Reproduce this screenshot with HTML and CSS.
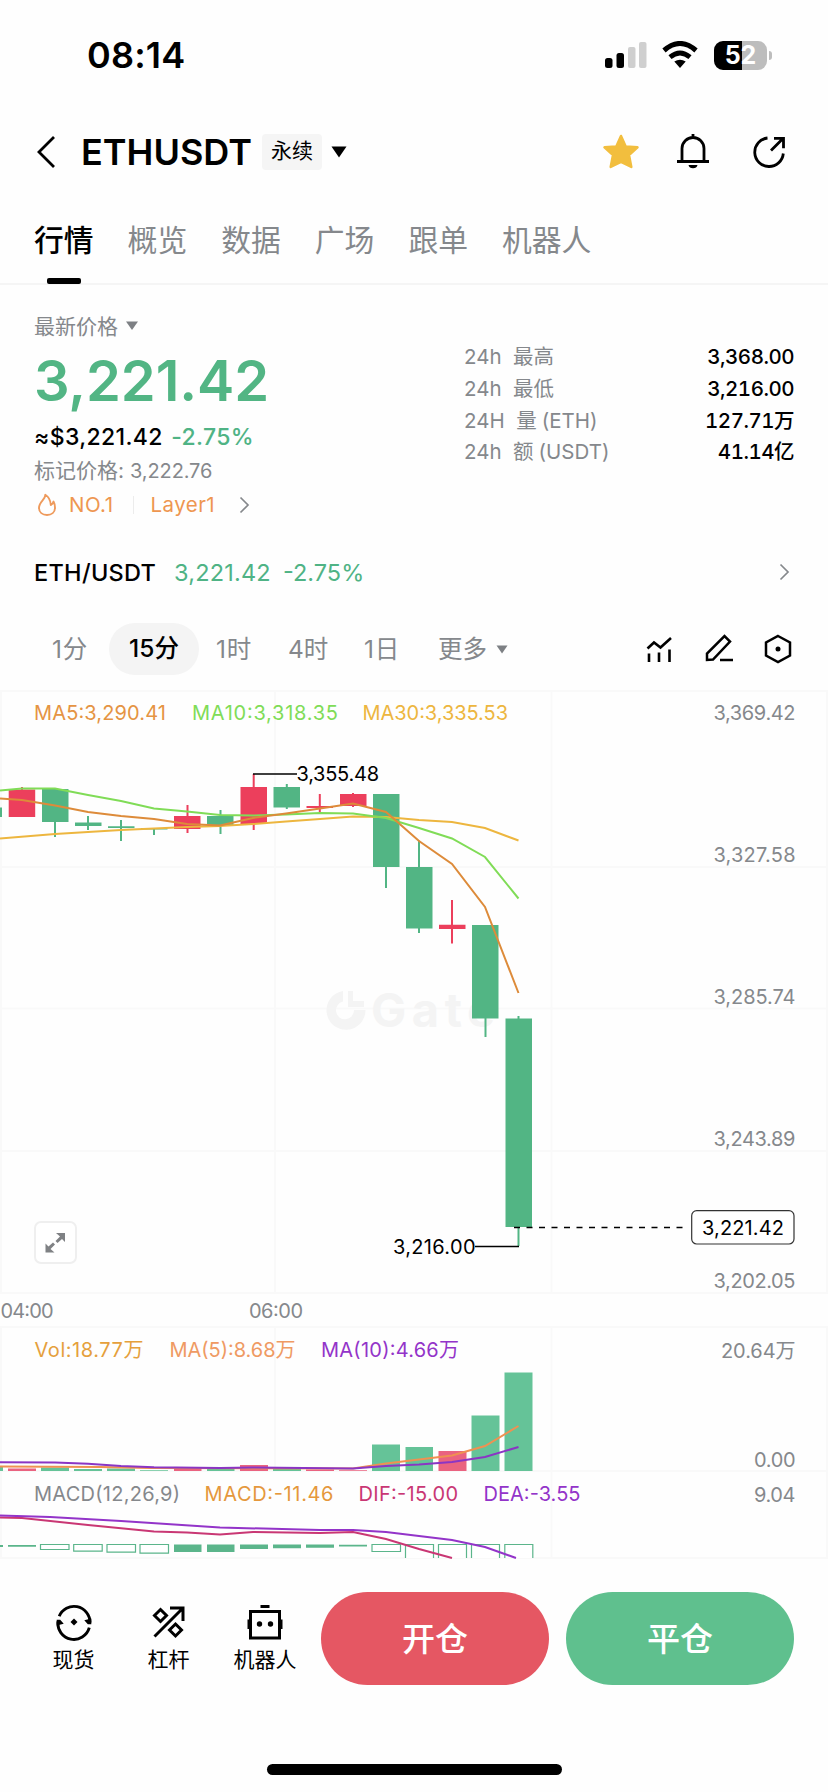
FILE: index.html
```html
<!DOCTYPE html>
<html lang="zh-CN">
<head>
<meta charset="utf-8">
<meta name="viewport" content="width=828">
<title>ETHUSDT 永续</title>
<link rel="stylesheet" href="styles.css">
</head>
<body>
<div class="screen">
  <div class="status">
    <span class="clock">08:14</span>
    <div class="status-icons">
      <svg class="signal" width="42" height="28" viewBox="0 0 42 28"><rect x="0" y="17" width="7.500" height="10" rx="2.5"/><rect x="11.5" y="12" width="7.500" height="15" rx="2.5"/><rect x="23" y="6" width="7.5" height="21" rx="2" fill="#cfcfcf"/><rect x="34" y="1" width="7.5" height="26" rx="2" fill="#cfcfcf"/></svg>
      <svg class="wifi" width="36" height="28" viewBox="0 0 36 28"><path d="M2 9.5Q18-4.500 34 9.500" fill="none" stroke="#000" stroke-width="5"/><path d="M8 16.200Q18 7.800 28 16.200" fill="none" stroke="#000" stroke-width="4.800"/><path d="M12.300 20.500Q18 16.800 23.700 20.500L18 27Z"/></svg>
      <div class="battery"><span>5</span><span>2</span></div>
      <i class="cap"></i>
    </div>
  </div>

  <header class="header">
    <svg class="back" width="20" height="34" viewBox="0 0 20 34"><path d="M18 2 3 17l15 15" fill="none" stroke="#000" stroke-width="2.800"/></svg>
    <h1>ETHUSDT</h1>
    <span class="badge">永续</span>
    <svg class="tri" width="16" height="12" viewBox="0 0 16 12"><path d="M.500.500h15L8 11.500Z"/></svg>
    <div class="actions">
      <svg width="38" height="38" viewBox="0 0 38 38"><path d="M19 3 23.700 13.500 35.500 14.300 27 22 29.300 34 19 29 8.700 34 11 22 2.500 14.300 14.300 13.500Z" fill="#f2be3e" stroke="#f2be3e" stroke-width="2.500" stroke-linejoin="round"/></svg>
      <svg width="38" height="38" viewBox="0 0 38 38" fill="none" stroke="#000" stroke-width="2.800"><path d="M3 28.500h32M8 28V15.500a11 11 0 0 1 22 0V28M19 1v4"/><path d="M14.500 32h9a4.600 4 0 0 1-9 0Z" fill="#000" stroke="none"/></svg>
      <svg width="38" height="38" viewBox="0 0 38 38" fill="none" stroke="#000" stroke-width="2.800"><path d="M17.500 5A14.300 14.300 0 1 0 33.300 20.500M21 17.500 33 5.500M24 5.300h9.500v10"/></svg>
    </div>
  </header>

  <nav class="tabs"><span class="on">行情</span><span>概览</span><span>数据</span><span>广场</span><span>跟单</span><span>机器人</span></nav>

  <section class="summary">
    <div class="quote">
      <div class="latest">最新价格<svg width="12" height="9" viewBox="0 0 12 9"><path d="M0 .500h12L6 9Z" fill="#7d8084"/></svg></div>
      <div class="price">3,221.42</div>
      <div class="usd">≈$3,221.42 <span>-2.75%</span></div>
      <div class="mark">标记价格: <span>3,222.76</span></div>
      <div class="tags">
        <svg width="20" height="24" viewBox="0 0 20 24"><path d="M8.300 1.800C8.500 6.500 2 9 2 14.800c0 4.500 3.500 7.200 8 7.200s8-2.700 8-7.200c0-2.500-.500-4.600-1.500-6.300-.300 1.800-1.300 3-2.700 3.500C13.500 7.500 12 4 8.300 1.800Z" fill="none" stroke="#ee9a5c" stroke-width="1.900" stroke-linejoin="round"/></svg>
        <span class="no">NO.1</span><i></i><span class="layer">Layer1</span>
        <svg class="chev" width="11" height="18" viewBox="0 0 11 18"><path d="m1.500 1.500 7.500 7.500-7.500 7.500" fill="none" stroke="#85888c" stroke-width="1.700"/></svg>
      </div>
    </div>
    <dl class="stats">
      <dt>24h&nbsp; 最高</dt><dd>3,368.00</dd>
      <dt>24h&nbsp; 最低</dt><dd>3,216.00</dd>
      <dt>24H&nbsp; 量<span>(ETH)</span></dt><dd>127.71万</dd>
      <dt>24h&nbsp; 额<span>(USDT)</span></dt><dd>41.14亿</dd>
    </dl>
  </section>

  <div class="spot">
    <b>ETH/USDT</b><span class="p">3,221.42</span><span class="c">-2.75%</span>
    <svg width="11" height="18" viewBox="0 0 11 18"><path d="m1.500 1.500 7.500 7.500-7.500 7.500" fill="none" stroke="#85888c" stroke-width="1.700"/></svg>
  </div>

  <div class="frames">
    <span class="f1">1分</span><span class="on">15分</span><span class="f3">1时</span><span class="f4">4时</span><span class="f5">1日</span><span class="more">更多<svg width="12" height="9" viewBox="0 0 12 9"><path d="M.500.500h11L6 8.500Z" fill="#7d8084"/></svg></span>
    <div class="tools">
      <svg width="28" height="30" viewBox="0 0 28 30" fill="none" stroke="#000" stroke-width="2.600"><path d="M1.500 14.500 8 8.500l6.500 5L25 4M3 19.500v8.500M13 18.500V28M23.500 15.500V28"/></svg>
      <svg width="30" height="30" viewBox="0 0 30 30" fill="none" stroke="#000" stroke-width="2.500"><path d="M3 26v-6.500L20.500 2l5.500 5.500L9 25.500ZM16 26h13"/></svg>
      <svg width="28" height="30" viewBox="0 0 28 30"><path d="m14 2 12 6.500v13L14 28 2 21.500v-13Z" fill="none" stroke="#000" stroke-width="2.500"/><circle cx="14" cy="15" r="2.500"/></svg>
    </div>
  </div>

  <svg class="chart" width="828" height="870" viewBox="0 690 828 870">
    <g class="grid">
      <path d="M1 691V1293M275 691V1293M551.500 691V1293M827 691V1293M0 691H828M0 867H828M0 1008.500H828M0 1151H828M0 1293H828"/>
      <path d="M0 1327H828M0 1471H828M0 1558H828M1 1327V1558M275 1327V1471M551.500 1327V1558M827 1327V1558"/>
    </g>
    <g class="watermark">
      <path d="M343 991A19.500 19.500 0 1 0 365.500 1010H354A9 9 0 1 1 343 1001.500Z"/><path d="M348 991h5v10h11v6h-16Z"/>
      <text x="371" y="1027" textLength="124">Gate</text>
    </g>
    <g class="down">
      <path class="wick" d="M55 789V837M88 816V830M121 820V841M154 828V835M220.500 810V834M286.800 784V809M386 794V888M419 840.500V933M485.500 925V1037M518.500 1016V1246"/>
      <path d="M0 807.500h2v9.500h-2ZM42 789h26.500v33h-26.500ZM75 822.500h26.500v3.500h-26.500ZM108 826.300h26.500v1.800h-26.500ZM141 828h26.500v1.500h-26.500ZM207 816h26.500v9h-26.500ZM273.500 787h26.500v20.500h-26.500ZM373 794h26.500v73h-26.500ZM406 867h26.500v61.500h-26.500ZM472 925h26.500v93.500h-26.500ZM505.500 1018.500h26.500v208.500h-26.500Z"/>
    </g>
    <g class="up">
      <path class="wick" d="M22 787V816M187.500 805V833M253.700 774V830M319.800 794V812.500M353 793V807M452 900V943.500"/>
      <path d="M8.700 789.500h26.500v27.500h-26.500ZM174 816h26.500v13h-26.500ZM240.500 787h26.500v37h-26.500ZM306.500 806h26.500v2h-26.500ZM340 794h26.500v12h-26.500ZM439 924.700h26.500v4.300h-26.500Z"/>
    </g>
    <g class="line">
      <polyline stroke="#edb63f" points="0,838.500 55,834 121,830 187,827 220,826 253,824 286,821.500 320,819 353,816.500 386,817 419,820 452,822 485,828 518.500,840.500"/>
      <polyline stroke="#80dc57" points="0,790.500 22,788.500 55,788.500 88,795 121,801 154,808.500 187,811.500 220,815 253,815.500 286,814.500 320,813 353,813.500 386,818 419,828 452,838.500 485,857 518.500,898.500"/>
      <polyline stroke="#dd8b3a" points="0,798.500 22,800 55,805.500 88,812 121,816 154,819 187,824 220,825.500 253,818 286,813.500 320,808.500 353,803.500 386,812 419,841 452,864 485,907 518.500,993"/>
    </g>
    <path class="ink" d="M253 774H297M475 1246.500H519"/>
    <path class="ink dash" d="M514 1227.500H687"/>
    <rect class="tag" x="691.700" y="1210.700" width="102.300" height="33.300" rx="5"/>
    <g class="black">
      <text x="296.500" y="781" textLength="82.500">3,355.48</text>
      <text x="393" y="1254" textLength="82.500">3,216.00</text>
      <text x="702" y="1235" textLength="82">3,221.42</text>
    </g>
    <g class="axis">
      <text x="713.500" y="720" textLength="82">3,369.42</text>
      <text x="713.500" y="862" textLength="82">3,327.58</text>
      <text x="713.500" y="1004" textLength="82">3,285.74</text>
      <text x="713.500" y="1146" textLength="82">3,243.89</text>
      <text x="713.500" y="1288" textLength="82">3,202.05</text>
      <text x="0.500" y="1318" textLength="53">04:00</text>
      <text x="249" y="1318" textLength="54">06:00</text>
      <text x="721" y="1357.500" textLength="74.500">20.64万</text>
      <text x="754" y="1466.500" textLength="41.500">0.00</text>
      <text x="754" y="1501.500" textLength="41.500">9.04</text>
      <text x="34" y="1501" textLength="146">MACD(12,26,9)</text>
    </g>
    <g class="legend">
      <text x="34" y="720" textLength="132" fill="#e59443">MA5:3,290.41</text>
      <text x="192" y="720" textLength="146" fill="#80dc57">MA10:3,318.35</text>
      <text x="362.500" y="720" textLength="145.500" fill="#edb63f">MA30:3,335.53</text>
      <text x="34.500" y="1357" textLength="109" fill="#e5a03c">Vol:18.77万</text>
      <text x="169.500" y="1357" textLength="126" fill="#ef9a63">MA(5):8.68万</text>
      <text x="321" y="1357" textLength="138" fill="#9334c9">MA(10):4.66万</text>
      <text x="204.500" y="1501" textLength="129" fill="#e5983c">MACD:-11.46</text>
      <text x="358.500" y="1501" textLength="99.500" fill="#c93774">DIF:-15.00</text>
      <text x="483.500" y="1501" textLength="97" fill="#9334c9">DEA:-3.55</text>
    </g>
    <g fill="#65c398">
      <path d="M0 1466h3v5h-3ZM41 1467.500h28v3.500h-28ZM74 1469h28v2h-28ZM107 1468.500h28v2.500h-28ZM140 1470.300h28v.7h-28ZM207 1469h27.500v2h-27.500ZM273 1468.500h28v2.500h-28ZM372 1444.500h28v26.500h-28ZM405.500 1447h27.500v24h-27.500ZM471.500 1415.500h28v55.500h-28ZM504.500 1372.500h28v98.500h-28Z"/>
    </g>
    <path fill="#ea6380" d="M8 1468.500h28v2.500h-28ZM174 1468.500h27.500v2.500h-27.500ZM240 1465h28v6h-28ZM306 1469.500h28v1.500h-28ZM339 1470.300h28v.7h-28ZM438.500 1451h28v20h-28Z"/>
    <g class="line">
      <polyline stroke="#ef9152" points="0,1466.500 100,1467 150,1468 353,1468.500 386,1463.500 419,1459.500 452,1455.500 485,1446 518.500,1426"/>
      <polyline stroke="#8a35c4" points="0,1462.300 55,1462.500 88,1463.800 121,1466 154,1467.300 220,1468 253,1467.500 353,1468.500 386,1466 419,1464.500 452,1462 485,1457 518.500,1447"/>
    </g>
    <g fill="#5bb58b"><path d="M0 1545h3v2h-3ZM8 1545h28v1.700h-28ZM174 1544.500h27.500v7.500h-27.500ZM207 1544.500h27.500v7.500h-27.500ZM240 1544.500h28v4.500h-28ZM273 1544.500h28v3.700h-28ZM306 1544.500h28v3.300h-28ZM339 1544.800h28v1.700h-28Z"/></g>
    <path class="hollow" d="M40.500 1544.500h28.500v5h-28.500ZM73.700 1544.500h28.500v6.700h-28.500ZM107 1544.500h28.500v7.700h-28.500ZM140 1544.500h28.500v8.700h-28.500ZM372 1544.500h28.500v7h-28.500ZM405.500 1558V1544.500h28V1558M438.500 1558V1544.500h28V1558M471.500 1558V1544.500h28V1558M504.800 1558V1544.500h28V1558"/>
    <g class="line">
      <polyline stroke="#c93774" points="0,1517.500 22,1518 88,1525 154,1531.500 187,1532.500 220,1534.500 253,1532 320,1533 353,1532 386,1539 419,1549 452,1558"/>
      <polyline stroke="#9334c9" points="0,1515.500 50,1517 121,1521 220,1527.500 320,1530 353,1530 386,1532 419,1536 452,1540 485,1547 516,1558"/>
    </g>
    <g>
      <rect x="35" y="1222" width="41" height="41" rx="6" fill="#fff" stroke="#efefef" stroke-width="2"/>
      <path fill="#7f8184" d="M56 1233h9v9l-3-3-4.500 4-2-2 4.500-4.500ZM54.500 1252.500h-9v-9l3 3 4.500-4 2 2-4.500 4.500Z"/>
    </g>
  </svg>

  <footer class="bottom">
    <div class="item i1"><svg width="38" height="38" viewBox="0 0 38 38" fill="none" stroke="#000" stroke-width="2.900"><path d="M4.200 13.300A16 16 0 0 1 35 19.500M34.300 24.700A16 16 0 0 1 3 18.500"/><path d="M29.300 17.200 36.300 15.500v5.800h-3.500ZM8.700 20.800 1.700 22.500v-5.800h3.500Z" fill="#000" stroke="none"/><path d="m19 15.500 3.500 3.500-3.500 3.500-3.500-3.500Z" fill="#000" stroke="none"/></svg><span>现货</span></div>
    <div class="item i2"><svg width="38" height="38" viewBox="0 0 38 38" fill="none" stroke="#000" stroke-width="3"><path d="M4.500 33.500 32.500 5.500M20 5h13v13M10.500 6.500l6 6-6 6-6-6ZM25.500 21l6 6-6 6-6-6Z"/></svg><span>杠杆</span></div>
    <div class="item i3"><svg width="38" height="38" viewBox="0 0 38 38" fill="none" stroke="#000" stroke-width="3"><path d="M4.500 8.500h29v26.500h-29ZM14.500 3.500h9M3 16.500v9.500M35 16.500v9.500"/><circle cx="13.500" cy="21" r="2.700" fill="#000" stroke="none"/><circle cx="24.500" cy="21" r="2.700" fill="#000" stroke="none"/></svg><span>机器人</span></div>
    <button class="open">开仓</button>
    <button class="close">平仓</button>
  </footer>
  <div class="home"><i></i></div>
</div>
</body>
</html>
```
FILE: styles.css
```css
* { box-sizing: border-box; margin: 0; }
body { background: #fefefe; font-family: Inter, "Noto Sans CJK SC", sans-serif; color: #000; }
.screen { width: 828px; height: 1792px; display: flex; flex-direction: column; overflow: hidden; white-space: nowrap; }
svg { display: block; flex: none; }

.status { height: 110px; padding: 0 56px 0 87px; display: flex; align-items: center; justify-content: space-between; }
.clock { font-size: 36px; font-weight: 600; letter-spacing: .2px; }
.status-icons { display: flex; align-items: center; }
.wifi { margin: 0 16px 0 15px; }
.battery { width: 53px; height: 29px; border-radius: 9px; background: linear-gradient(90deg, #000 52%, #bdbdbd 52%); color: #fff; font-size: 25px; font-weight: 700; line-height: 29px; display: flex; justify-content: center; }
.cap { width: 3px; height: 9px; margin-left: 2px; border-radius: 0 4px 4px 0; background: #bdbdbd; }

.header { height: 84px; padding: 0 40px 0 36px; display: flex; align-items: center; }
h1 { margin-left: 25px; width: 181px; font-size: 36px; font-weight: 600; letter-spacing: 0; }
.badge { width: 60px; height: 36px; background: #f5f5f5; border-radius: 4px; font-size: 21px; line-height: 34px; text-align: center; }
.tri { margin-left: 9px; }
.actions { margin-left: auto; display: flex; gap: 38px; }
.actions svg:first-child { margin-right: -4px; }

.tabs { height: 91px; padding: 18px 34px 0; display: flex; gap: 34px; border-bottom: 2px solid #f5f5f5; font-size: 29.800px; line-height: 56px; color: #85888c; }
.tabs .on { color: #000; font-weight: 500; height: 72px; display: flex; flex-direction: column; align-items: center; justify-content: space-between; }
.tabs .on::after { content: ""; width: 34px; height: 6px; border-radius: 2px; background: #000; }

.summary { height: 245px; padding: 23px 34px 0; display: flex; justify-content: space-between; }
.latest { display: flex; align-items: center; gap: 8px; height: 34px; font-size: 21px; color: #85888c; }
.price { height: 74px; line-height: 78px; font-size: 56px; font-weight: 600; letter-spacing: -.1px; color: #52b584; }
.usd { height: 35px; line-height: 42px; font-size: 23px; font-weight: 500; letter-spacing: .35px; }
.usd span { color: #4fb385; margin-left: 2px; }
.mark { height: 32px; line-height: 39px; font-size: 21px; color: #85888c; }
.mark span { font-size: 20px; letter-spacing: -.1px; }
.tags { display: flex; align-items: center; height: 43px; font-size: 20.500px; color: #ee9650; margin-left: 3px; letter-spacing: .45px; }
.tags i { width: 1px; height: 18px; background: #ececec; margin: 0 17px 0 19px; }
.no { margin-left: 12px; }
.chev { margin-left: 24px; }
.stats { width: 330px; margin-top: 33px; display: grid; grid-template-columns: auto auto; grid-auto-rows: 31.800px; line-height: 31.800px; justify-content: space-between; font-size: 20.500px; color: #85888c; }
.stats span { margin-left: 5px; }
.stats dd { color: #000; font-weight: 500; text-align: right; font-size: 20.500px; font-variant-numeric: tabular-nums; letter-spacing: -.5px; }

.spot { height: 84px; padding: 0 38px 0 34px; display: flex; align-items: center; font-size: 23.500px; color: #4fb385; }
.spot b { color: #000; font-weight: 500; width: 140px; letter-spacing: .3px; }
.spot .p { width: 109px; letter-spacing: .2px; }
.spot svg { margin-left: auto; }

.frames { height: 76px; padding: 0 36px 6px 52px; display: flex; align-items: center; font-size: 24.500px; line-height: 36px; color: #85888c; }
.f1 { width: 57px; letter-spacing: .8px; }
.frames .on { width: 90px; height: 52px; line-height: 50px; border-radius: 26px; background: #f4f4f4; color: #000; text-align: center; font-weight: 500; }
.f3 { margin-left: 17px; width: 72px; letter-spacing: .8px; }
.f4 { width: 76px; }
.f5 { width: 74px; letter-spacing: .8px; }
.more { display: flex; align-items: center; gap: 9px; }
.tools { margin-left: auto; display: flex; gap: 30px; }

.chart text { font-size: 20px; }
.grid { fill: none; stroke: #f9f9f9; stroke-width: 2; }
.watermark { fill: #f4f4f4; }
.chart .watermark text { font-size: 47px; font-weight: 700; }
.down { fill: #52b584; stroke: #52b584; stroke-width: 0; }
.up { fill: #ec3f5c; stroke: #ec3f5c; stroke-width: 0; }
.down .wick, .up .wick { stroke-width: 2; }
.line { fill: none; stroke-width: 2; }
.ink { fill: none; stroke: #000; stroke-width: 1.500; }
.dash { stroke-dasharray: 6 6.500; }
.tag { fill: #fff; stroke: #333; stroke-width: 1.200; }
.axis { fill: #85888c; }
.hollow { fill: #fff; stroke: #5bb58b; stroke-width: 1.200; }

.bottom { height: 180px; padding: 32px 34px 0; display: flex; align-items: flex-start; }
.item { display: flex; flex-direction: column; align-items: center; font-size: 21px; line-height: 32px; padding-top: 11px; gap: 3px; }
.i1 { width: 79px; }
.i2 { width: 111px; }
.i3 { width: 82px; }
.bottom button { width: 228px; height: 93px; border: 0; border-radius: 47px; color: #fff; font: 500 33px/92px Inter, "Noto Sans CJK SC", sans-serif; padding: 0; }
.open { background: #e55763; margin-left: 15px; }
.close { background: #5fc08e; margin-left: 17px; }
.home { height: 52px; padding-top: 24px; display: flex; justify-content: center; }
.home i { width: 295px; height: 11px; border-radius: 6px; background: #000; }
```
